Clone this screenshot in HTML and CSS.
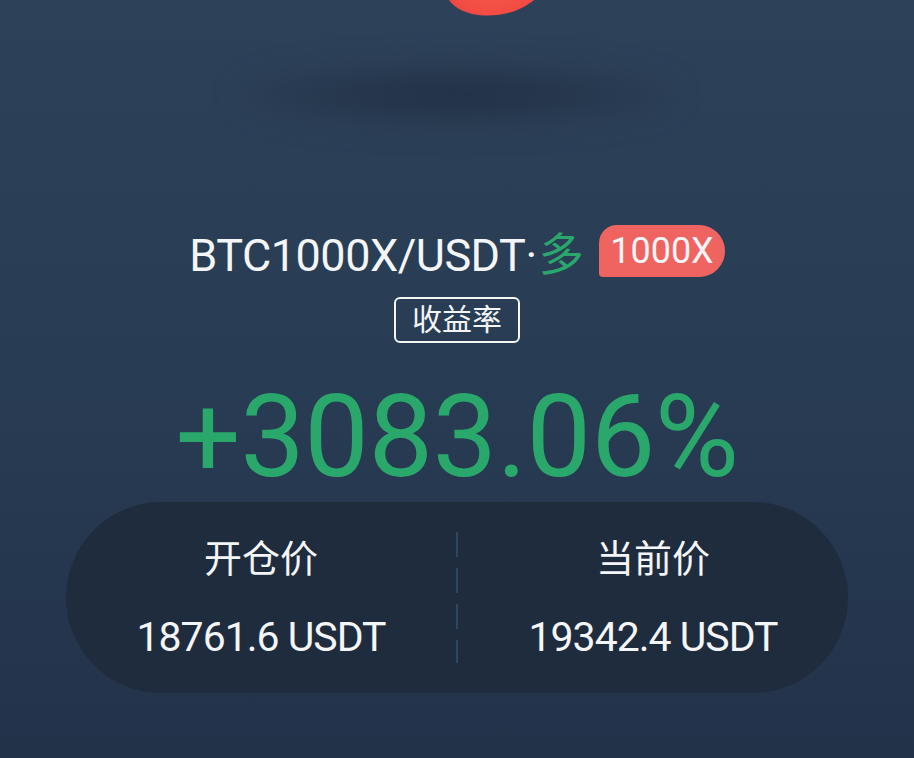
FILE: index.html
```html
<!DOCTYPE html>
<html lang="zh-CN">
<head>
    <meta charset="UTF-8">
    <meta name="viewport" content="width=device-width, initial-scale=1.0">
    <title>收益分享</title>
    <link rel="stylesheet" href="styles.css">
</head>
<body>

<div class="page">
    <div class="hero">
        <div class="blob"></div>
        <div class="blob-shadow"></div>
    </div>

    <div class="title-row">
        <span class="pair">BTC1000X/USDT·<span class="side">多</span></span>
        <span class="lever">1000X</span>
    </div>

    <div class="tag">收益率</div>

    <div class="rate">+3083.06%</div>

    <div class="price-card">
        <div class="price-col">
            <div class="price-label">开仓价</div>
            <div class="price-value">18761.6 USDT</div>
        </div>
        <div class="divider"></div>
        <div class="price-col">
            <div class="price-label">当前价</div>
            <div class="price-value">19342.4 USDT</div>
        </div>
    </div>
</div>

</body>
</html>
```

FILE: styles.css
```css
body {
    margin: 0;
    font-family: Roboto, "Noto Sans CJK SC", sans-serif;
    color: #f3f5f7;
    background: linear-gradient(180deg, #2d4259 0%, #283c54 50%, #223249 100%);
    height: 758px;
    overflow: hidden;
}

.page {
    display: flex;
    flex-direction: column;
    align-items: center;
}

.hero {
    width: 100%;
    height: 225px;
    display: flex;
    flex-direction: column;
    align-items: center;
}

.blob {
    width: 98px;
    height: 58px;
    margin-top: -43px;
    margin-left: 76px;
    border-radius: 50%;
    background: radial-gradient(ellipse at 50% 30%, #f8604f 0%, #f24b43 70%, #d8403d 100%);
    transform: rotate(-8deg);
}

.blob-shadow {
    width: 440px;
    height: 64px;
    margin-top: 48px;
    border-radius: 50%;
    background: radial-gradient(ellipse at center, rgba(30, 42, 60, 0.75) 0%, rgba(34, 48, 68, 0.45) 50%, rgba(40, 58, 80, 0) 100%);
    filter: blur(14px);
}

.title-row {
    display: flex;
    align-items: center;
    height: 52px;
    gap: 16px;
}

.pair {
    font-size: 45px;
    letter-spacing: -0.5px;
}

.side {
    color: #2aa86c;
    margin-left: 2px;
}

.lever {
    background-color: #ef6461;
    font-size: 36px;
    line-height: 52px;
    padding: 0 11px 0 11px;
    border-radius: 18px 26px 26px 4px;
}

.tag {
    margin-top: 20px;
    border: 2px solid #f3f5f7;
    border-radius: 6px;
    height: 42px;
    padding: 0 16px;
    font-size: 30px;
    line-height: 42px;
}

.rate {
    margin-top: 38px;
    font-size: 115px;
    line-height: 112px;
    color: #2aa86c;
    letter-spacing: -0.5px;
}

.price-card {
    margin-top: 9px;
    width: 782px;
    height: 191px;
    border-radius: 96px;
    background-color: #1f2c3d;
    display: flex;
    align-items: center;
}

.price-col {
    flex: 1;
    display: flex;
    flex-direction: column;
    align-items: center;
    gap: 37px;
}

.price-label {
    font-size: 38px;
    line-height: 41px;
}

.price-value {
    font-size: 41px;
    line-height: 40px;
    letter-spacing: -1px;
}

.divider {
    width: 2px;
    height: 131px;
    background: repeating-linear-gradient(180deg, #2f4564 0 25px, transparent 25px 36px);
}
```
